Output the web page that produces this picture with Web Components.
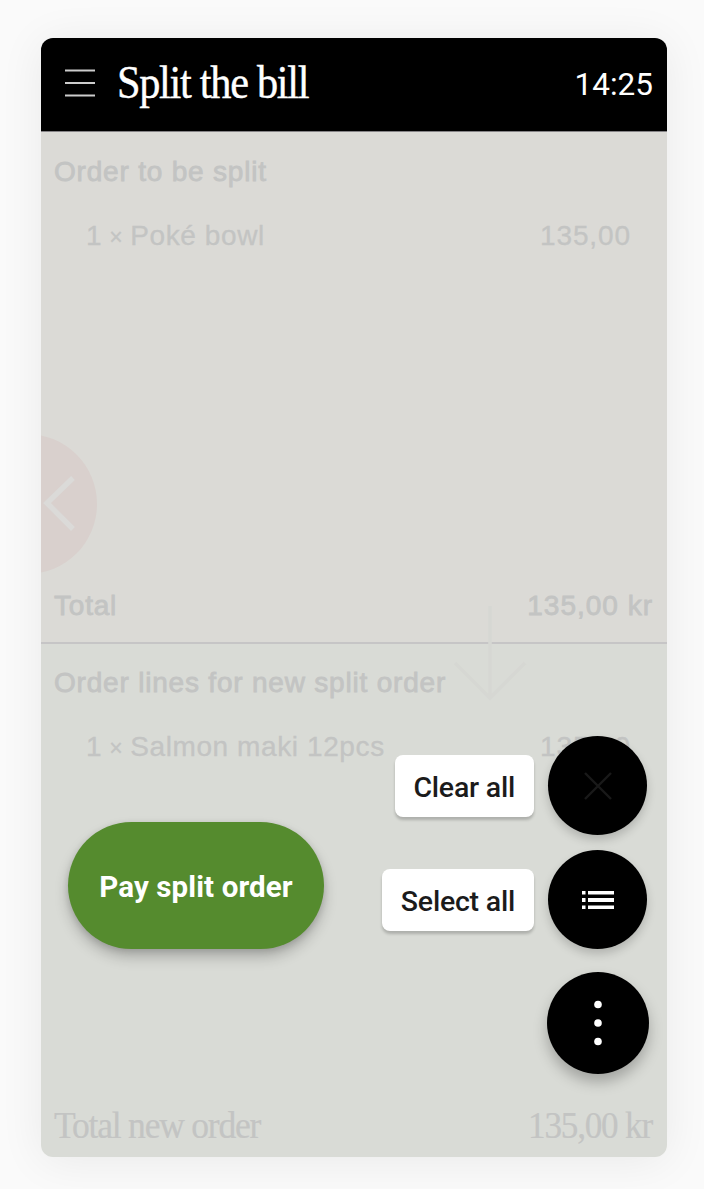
<!DOCTYPE html>
<html lang="en">
<head>
  <meta charset="UTF-8">
  <title>Split the bill</title>
  <style>
    body {
      margin: 0;
      background: #fafafa;
    }
  </style>
</head>
<body>
  <split-bill-app>
    <app-header slot="header" time="14:25">Split the bill</app-header>

    <order-panel slot="panels" class="source">
      <span slot="title">Order to be split</span>
      <order-line qty="1" name="Poké bowl" price="135,00"></order-line>
      <order-total slot="total" label="Total" amount="135,00 kr"></order-total>
    </order-panel>

    <order-panel slot="panels" class="target">
      <span slot="title">Order lines for new split order</span>
      <order-line qty="1" name="Salmon maki 12pcs" price="135,00"></order-line>
      <order-total slot="total" large label="Total new order" amount="135,00 kr"></order-total>
    </order-panel>

    <pay-button slot="pay">Pay split order</pay-button>

    <fab-action slot="actions" label="Clear all">
      <svg width="30" height="30" viewBox="0 0 30 30" fill="none" stroke="#191919" stroke-width="2.4">
        <path d="M2 2L28 28M28 2L2 28"/>
      </svg>
    </fab-action>
    <fab-action slot="actions" label="Select all">
      <svg width="32" height="20" viewBox="0 0 32 20" fill="#fff">
        <path d="M0 1h3.5v3.5H0zM6 1h26v3.5H6zM0 8h3.5v4H0zM6 8h26v4H6zM0 15.5h3.5V19H0zM6 15.5h26V19H6z"/>
      </svg>
    </fab-action>
    <fab-action slot="actions" main>
      <svg width="10" height="46" viewBox="0 0 10 46" fill="#fff">
        <circle cx="5" cy="4.5" r="3.8"/>
        <circle cx="5" cy="23" r="3.8"/>
        <circle cx="5" cy="41.5" r="3.8"/>
      </svg>
    </fab-action>
  </split-bill-app>

  <script>
    class SplitBillApp extends HTMLElement {
      constructor() {
        super();
        this.attachShadow({ mode: 'open' });
      }

      connectedCallback() {
        this.shadowRoot.innerHTML = `
          <style>
            :host {
              display: block;
              box-sizing: border-box;
              height: 1189px;
              padding: 38px 37px 32px 41px;
              overflow: hidden;
              font-family: "Liberation Sans", Arial, sans-serif;
            }

            .card {
              position: relative;
              display: grid;
              grid-template-rows: 94px 512px 1fr;
              height: 100%;
              border-radius: 12px;
              box-shadow: 0 4px 45px rgba(0, 0, 0, 0.07);
            }

            .back {
              position: absolute;
              left: 0;
              top: 396px;
              width: 56px;
              height: 140px;
            }

            .arrow {
              position: absolute;
              left: 409px;
              top: 566px;
            }

            .pay {
              position: absolute;
              left: 27px;
              top: 784px;
            }

            .actions {
              position: absolute;
              right: 18px;
              top: 698px;
              display: flex;
              flex-direction: column;
              align-items: flex-end;
              gap: 15px;
            }
          </style>

          <div class="card">
            <slot name="header"></slot>
            <slot name="panels"></slot>
            <svg class="back" viewBox="0 0 56 140" fill="none">
              <circle cx="-14" cy="70" r="70" fill="#d9d0cd"/>
              <path d="M32 44L6 69L32 95" stroke="#dbdad8" stroke-width="5.5"/>
            </svg>
            <svg class="arrow" width="80" height="100" viewBox="0 0 80 100" fill="none" stroke="#d6d7d3" stroke-width="3.5">
              <path d="M40 2V93M5 59L40 94L75 59"/>
            </svg>
            <div class="pay"><slot name="pay"></slot></div>
            <div class="actions"><slot name="actions"></slot></div>
          </div>
        `;
      }
    }

    class AppHeader extends HTMLElement {
      constructor() {
        super();
        this.attachShadow({ mode: 'open' });
      }

      connectedCallback() {
        this.shadowRoot.innerHTML = `
          <style>
            :host {
              display: flex;
              align-items: center;
              box-sizing: border-box;
              padding: 0 14px 3px 24px;
              background: #000;
              border-bottom: 1px solid #858386;
              border-radius: 12px 12px 0 0;
              color: #fff;
            }

            svg {
              flex: none;
              margin-right: 22px;
            }

            .title {
              font-family: "Liberation Serif", "Times New Roman", serif;
              font-size: 46px;
              line-height: 50px;
              letter-spacing: -1.4px;
              white-space: nowrap;
              transform: scaleX(0.92);
              transform-origin: left;
              -webkit-text-stroke: 0.4px currentColor;
            }

            .time {
              margin-left: auto;
              padding-top: 3px;
              font-family: Roboto, sans-serif;
              font-size: 31.5px;
            }
          </style>

          <svg width="30" height="28" viewBox="0 0 30 28" fill="none" stroke="#ccc" stroke-width="1.8">
            <path d="M0 1.5H30M0 14H30M0 26.5H30"/>
          </svg>
          <span class="title"><slot></slot></span>
          <span class="time">${this.getAttribute('time')}</span>
        `;
      }
    }

    class OrderPanel extends HTMLElement {
      constructor() {
        super();
        this.attachShadow({ mode: 'open' });
      }

      connectedCallback() {
        this.shadowRoot.innerHTML = `
          <style>
            :host {
              display: flex;
              flex-direction: column;
              box-sizing: border-box;
              padding: 24px 14px 20px 13px;
              background: #dbdad6;
              border-bottom: 2px solid #c6c5c6;
              color: #c3c4c3;
              font-size: 28px;
              line-height: 32px;
              letter-spacing: 0.8px;
            }

            :host(.target) {
              padding-top: 23px;
              padding-bottom: 10px;
              background: #d9dbd6;
              border-bottom: none;
              border-radius: 0 0 12px 12px;
            }

            .title {
              -webkit-text-stroke: 0.8px currentColor;
            }

            .lines {
              flex: 1;
              padding: 32px 22px 0 32px;
            }
          </style>

          <div class="title"><slot name="title"></slot></div>
          <div class="lines"><slot></slot></div>
          <slot name="total"></slot>
        `;
      }
    }

    class OrderLine extends HTMLElement {
      constructor() {
        super();
        this.attachShadow({ mode: 'open' });
      }

      connectedCallback() {
        this.shadowRoot.innerHTML = `
          <style>
            :host {
              display: flex;
              justify-content: space-between;
              white-space: nowrap;
              -webkit-text-stroke: 0.3px currentColor;
            }

            .name {
              letter-spacing: 0.6px;
            }

            .times {
              font-size: 23px;
            }

            .price {
              letter-spacing: 0.9px;
            }
          </style>

          <span class="name">${this.getAttribute('qty')}<span class="times"> × </span>${this.getAttribute('name')}</span>
          <span class="price">${this.getAttribute('price')}</span>
        `;
      }
    }

    class OrderTotal extends HTMLElement {
      constructor() {
        super();
        this.attachShadow({ mode: 'open' });
      }

      connectedCallback() {
        this.shadowRoot.innerHTML = `
          <style>
            :host {
              display: flex;
              justify-content: space-between;
              white-space: nowrap;
              -webkit-text-stroke: 0.8px currentColor;
            }

            .amount {
              letter-spacing: 1px;
            }

            :host([large]) {
              font-family: "Liberation Serif", "Times New Roman", serif;
              font-size: 38px;
              line-height: 44px;
              letter-spacing: -1.3px;
              -webkit-text-stroke: 0.2px currentColor;
            }

            :host([large]) .label {
              transform: scaleX(0.935);
              transform-origin: left;
            }

            :host([large]) .amount {
              margin-right: 1px;
              letter-spacing: -1.3px;
              transform: scaleX(0.925);
              transform-origin: right;
            }
          </style>

          <span class="label">${this.getAttribute('label')}</span>
          <span class="amount">${this.getAttribute('amount')}</span>
        `;
      }
    }

    class PayButton extends HTMLElement {
      constructor() {
        super();
        this.attachShadow({ mode: 'open' });
      }

      connectedCallback() {
        this.shadowRoot.innerHTML = `
          <style>
            :host {
              display: block;
            }

            button {
              display: block;
              width: 256px;
              height: 127px;
              padding: 2px 0 0;
              border: none;
              border-radius: 64px;
              background: #558b2e;
              color: #fff;
              font: bold 29.5px Roboto, sans-serif;
              letter-spacing: 0.1px;
              white-space: nowrap;
              box-shadow: 0 8px 14px rgba(0, 0, 0, 0.22), 0 2px 6px rgba(0, 0, 0, 0.12);
            }
          </style>

          <button><slot></slot></button>
        `;
      }
    }

    class FabAction extends HTMLElement {
      constructor() {
        super();
        this.attachShadow({ mode: 'open' });
      }

      connectedCallback() {
        const label = this.getAttribute('label');

        this.shadowRoot.innerHTML = `
          <style>
            :host {
              display: flex;
              align-items: center;
              gap: 14px;
              padding-right: 2px;
            }

            :host([main]) {
              padding: 8px 0 0;
            }

            .label {
              box-sizing: border-box;
              height: 62px;
              padding: 2px 19px 0 18.5px;
              border-radius: 8px;
              background: #fff;
              color: #1b1b1b;
              font: 500 28.5px/62px Roboto, sans-serif;
              letter-spacing: -0.22px;
              white-space: nowrap;
              box-shadow: 0 3px 3px rgba(0, 0, 0, 0.2);
            }

            button {
              display: flex;
              align-items: center;
              justify-content: center;
              width: 99px;
              height: 99px;
              padding: 0;
              border: none;
              border-radius: 50%;
              background: #000;
              box-shadow: 0 5px 10px rgba(0, 0, 0, 0.18);
            }

            :host([main]) button {
              width: 102px;
              height: 102px;
              box-shadow: 0 8px 14px rgba(0, 0, 0, 0.25);
            }
          </style>

          ${label ? `<span class="label">${label}</span>` : ''}
          <button><slot></slot></button>
        `;
      }
    }

    customElements.define('split-bill-app', SplitBillApp);
    customElements.define('app-header', AppHeader);
    customElements.define('order-panel', OrderPanel);
    customElements.define('order-line', OrderLine);
    customElements.define('order-total', OrderTotal);
    customElements.define('pay-button', PayButton);
    customElements.define('fab-action', FabAction);
  </script>
</body>
</html>
